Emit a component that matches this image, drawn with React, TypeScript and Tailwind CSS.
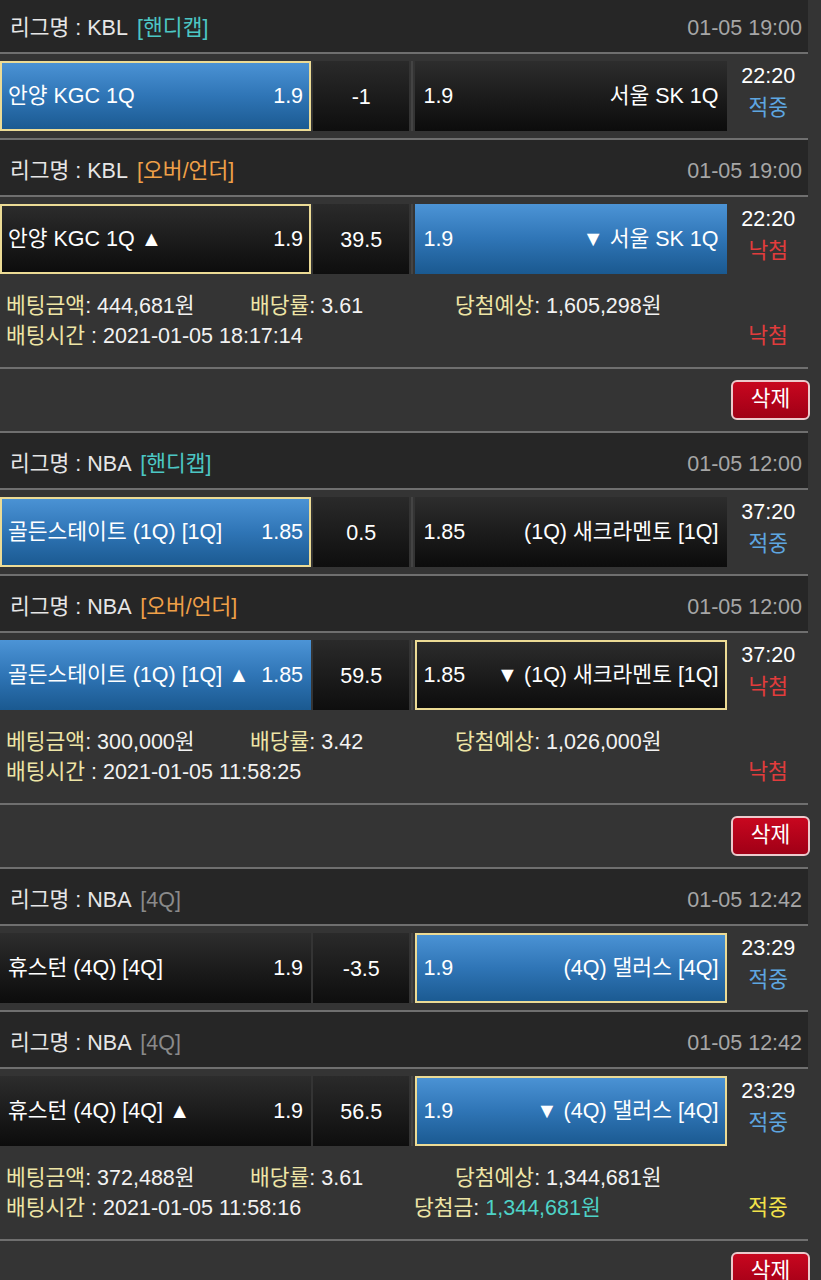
import React from 'react'

type Side = 'home' | 'away'

interface Game {
  league: string
  tag: string
  tagColor: string
  date: string
  home: string
  homeOdds: string
  mid: string
  awayOdds: string
  away: string
  time: string
  result: '적중' | '낙첨'
  pick: Side
  win: Side
}

interface Slip {
  games: Game[]
  amount: string
  rate: string
  expected: string
  betTime: string
  status: '적중' | '낙첨'
  payout?: string
}

const TEAL = 'text-[#4cc6c4]'
const ORANGE = 'text-[#f0a048]'
const GREY = 'text-[#8a8a8a]'

const slips: Slip[] = [
  {
    games: [
      { league: 'KBL', tag: '[핸디캡]', tagColor: TEAL, date: '01-05 19:00', home: '안양 KGC 1Q', homeOdds: '1.9', mid: '-1', awayOdds: '1.9', away: '서울 SK 1Q', time: '22:20', result: '적중', pick: 'home', win: 'home' },
      { league: 'KBL', tag: '[오버/언더]', tagColor: ORANGE, date: '01-05 19:00', home: '안양 KGC 1Q ▲', homeOdds: '1.9', mid: '39.5', awayOdds: '1.9', away: '▼ 서울 SK 1Q', time: '22:20', result: '낙첨', pick: 'home', win: 'away' },
    ],
    amount: '444,681원',
    rate: '3.61',
    expected: '1,605,298원',
    betTime: '2021-01-05 18:17:14',
    status: '낙첨',
  },
  {
    games: [
      { league: 'NBA', tag: '[핸디캡]', tagColor: TEAL, date: '01-05 12:00', home: '골든스테이트 (1Q) [1Q]', homeOdds: '1.85', mid: '0.5', awayOdds: '1.85', away: '(1Q) 새크라멘토 [1Q]', time: '37:20', result: '적중', pick: 'home', win: 'home' },
      { league: 'NBA', tag: '[오버/언더]', tagColor: ORANGE, date: '01-05 12:00', home: '골든스테이트 (1Q) [1Q] ▲', homeOdds: '1.85', mid: '59.5', awayOdds: '1.85', away: '▼ (1Q) 새크라멘토 [1Q]', time: '37:20', result: '낙첨', pick: 'away', win: 'home' },
    ],
    amount: '300,000원',
    rate: '3.42',
    expected: '1,026,000원',
    betTime: '2021-01-05 11:58:25',
    status: '낙첨',
  },
  {
    games: [
      { league: 'NBA', tag: '[4Q]', tagColor: GREY, date: '01-05 12:42', home: '휴스턴 (4Q) [4Q]', homeOdds: '1.9', mid: '-3.5', awayOdds: '1.9', away: '(4Q) 댈러스 [4Q]', time: '23:29', result: '적중', pick: 'away', win: 'away' },
      { league: 'NBA', tag: '[4Q]', tagColor: GREY, date: '01-05 12:42', home: '휴스턴 (4Q) [4Q] ▲', homeOdds: '1.9', mid: '56.5', awayOdds: '1.9', away: '▼ (4Q) 댈러스 [4Q]', time: '23:29', result: '적중', pick: 'away', win: 'away' },
    ],
    amount: '372,488원',
    rate: '3.61',
    expected: '1,344,681원',
    betTime: '2021-01-05 11:58:16',
    status: '적중',
    payout: '1,344,681원',
  },
]

function Sep() {
  return <div className="h-[2px] w-[808px] bg-[#6f6f6f]" />
}

function cellClass(win: boolean, pick: boolean) {
  const bg = win
    ? 'bg-gradient-to-b from-[#4c94d6] via-[#2f75b6] to-[#1a5990]'
    : 'bg-gradient-to-b from-[#2d2d2d] via-[#1c1c1c] to-[#0c0c0c]'
  const border = pick ? 'border-[#ecdb95]' : 'border-transparent'
  return `flex items-center justify-between border-2 bg-origin-border pt-[1px] ${bg} ${border}`
}

function GameRows({ g }: { g: Game }) {
  return (
    <>
      <div className="flex h-[55px] w-[808px] items-center justify-between bg-[#262626] pl-[10px] pr-[6px] pt-[9px]">
        <div className="text-[#e6e6e6]">
          리그명 : {g.league} <span className={`ml-[4px] ${g.tagColor}`}>{g.tag}</span>
        </div>
        <div className="text-[#a6a6a6]">{g.date}</div>
      </div>
      <Sep />
      <div className="flex h-[84px] w-[808px] items-start gap-[2px] pt-[7px]">
        <div className={`${cellClass(g.win === 'home', g.pick === 'home')} h-[70px] w-[313px] pl-[6px] pr-[6px] text-white`}>
          <span>{g.home}</span>
          <span>{g.homeOdds}</span>
        </div>
        <div className="flex h-[70px] w-[97px] items-center justify-center bg-gradient-to-b from-[#2a2a2a] via-[#1c1c1c] to-[#0e0e0e] pt-[4px] text-white">
          {g.mid}
        </div>
        <div className="h-[70px] w-[2px] bg-[#444]" />
        <div className={`${cellClass(g.win === 'away', g.pick === 'away')} h-[70px] w-[313px] pl-[6px] pr-[6px] text-white`}>
          <span>{g.awayOdds}</span>
          <span>{g.away}</span>
        </div>
        <div className="flex w-[80px] flex-col items-center leading-[30px]">
          <span className="text-white">{g.time}</span>
          <span className={`mt-[2px] ${g.result === '적중' ? 'text-[#5ea6e0]' : 'text-[#e23c3c]'}`}>{g.result}</span>
        </div>
      </div>
    </>
  )
}

function SlipBlock({ s, first }: { s: Slip; first: boolean }) {
  return (
    <div>
      {!first && <Sep />}
      <GameRows g={s.games[0]} />
      <Sep />
      <GameRows g={s.games[1]} />
      <div className="h-[86px] w-[808px] pl-[6px] pt-[10px] leading-[30px] text-[#f2f2f2]">
        <div className="grid grid-cols-[244px_205px_1fr]">
          <span>
            <span className="text-[#eee5a6]">베팅금액</span>: {s.amount}
          </span>
          <span>
            <span className="text-[#eee5a6]">배당률</span>: {s.rate}
          </span>
          <span>
            <span className="text-[#eee5a6]">당첨예상</span>: {s.expected}
          </span>
        </div>
        <div className="grid grid-cols-[408px_1fr_80px]">
          <span>
            <span className="text-[#eee5a6]">배팅시간</span> : {s.betTime}
          </span>
          <span>
            {s.payout && (
              <>
                <span className="text-[#eee5a6]">당첨금</span>: <span className="text-[#4ed2c6]">{s.payout}</span>
              </>
            )}
          </span>
          <span className={`text-center ${s.status === '적중' ? 'text-[#f2e24a]' : 'text-[#e23c3c]'}`}>{s.status}</span>
        </div>
      </div>
      <Sep />
      <div className="flex h-[62px] justify-end pr-[11px] pt-[11px]">
        <button className="h-[40px] w-[79px] rounded-[6px] border-2 border-[#ecc9cc] bg-gradient-to-b from-[#c8071f] to-[#a00016] text-white">
          삭제
        </button>
      </div>
    </div>
  )
}

export default function App() {
  return (
    <div
      className="min-h-[1280px] w-full overflow-hidden bg-[#343434] text-[21.5px] leading-none"
      style={{ fontFamily: '"Liberation Sans", Arial, "Noto Sans CJK KR", sans-serif' }}
    >
      <div className="-mt-[3px]">
        {slips.map((s, i) => (
          <SlipBlock key={i} s={s} first={i === 0} />
        ))}
      </div>
    </div>
  )
}
